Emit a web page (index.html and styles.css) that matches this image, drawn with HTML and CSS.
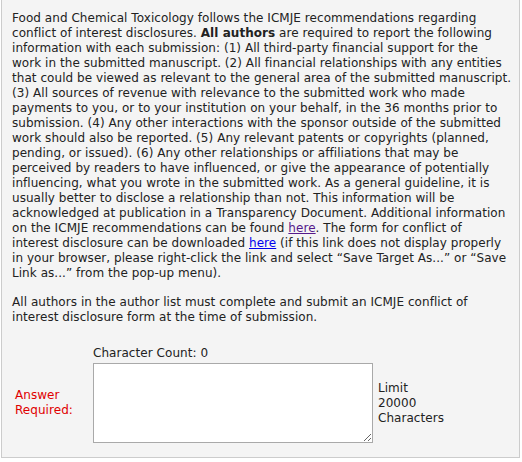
FILE: index.html
```html
<!DOCTYPE html>
<html lang="en">
<head>
    <meta charset="UTF-8">
    <meta name="viewport" content="width=device-width, initial-scale=1.0">
    <title>Conflict of Interest</title>
    <link rel="stylesheet" href="styles.css">
</head>
<body>

<div class="question">
    <p class="instructions">
        Food and Chemical Toxicology follows the ICMJE recommendations regarding<br>
        conflict of interest disclosures. <b>All authors</b> are required to report the following<br>
        information with each submission: (1) All third-party financial support for the<br>
        work in the submitted manuscript. (2) All financial relationships with any entities<br>
        that could be viewed as relevant to the general area of the submitted manuscript.<br>
        (3) All sources of revenue with relevance to the submitted work who made<br>
        payments to you, or to your institution on your behalf, in the 36 months prior to<br>
        submission. (4) Any other interactions with the sponsor outside of the submitted<br>
        work should also be reported. (5) Any relevant patents or copyrights (planned,<br>
        pending, or issued). (6) Any other relationships or affiliations that may be<br>
        perceived by readers to have influenced, or give the appearance of potentially<br>
        influencing, what you wrote in the submitted work. As a general guideline, it is<br>
        usually better to disclose a relationship than not. This information will be<br>
        acknowledged at publication in a Transparency Document. Additional information<br>
        on the ICMJE recommendations can be found <a href="#" class="visited">here</a>. The form for conflict of<br>
        interest disclosure can be downloaded <a href="#">here</a> (if this link does not display properly<br>
        in your browser, please right-click the link and select &ldquo;Save Target As...&rdquo; or &ldquo;Save<br>
        Link as...&rdquo; from the pop-up menu).
    </p>
    <p class="instructions">
        All authors in the author list must complete and submit an ICMJE conflict of<br>
        interest disclosure form at the time of submission.
    </p>

    <div class="answer">
        <div class="count">Character Count: 0</div>
        <label class="required" for="answer">Answer<br>Required:</label>
        <textarea id="answer"></textarea>
        <div class="limit">Limit<br>20000<br>Characters</div>
    </div>
</div>

</body>
</html>
```

FILE: styles.css
```css
body {
    margin: 0;
    background-color: #ffffff;
    font-family: 'DejaVu Sans', Verdana, sans-serif;
    font-size: 12px;
    letter-spacing: 0.05px;
    line-height: 15px;
    color: #222222;
}

.question {
    width: 497px;
    margin-left: 1px;
    padding: 11px 10px 14px 10px;
    background-color: #f4f4f4;
    border: 1px solid #cccccc;
    border-top: none;
}

.instructions {
    margin: 0 0 14px 0;
    white-space: nowrap;
}

.instructions a {
    color: #0000ee;
}

.instructions a.visited {
    color: #551a8b;
}

.answer {
    display: grid;
    grid-template-columns: 81px 280px auto;
    align-items: center;
    margin-top: 21px;
}

.count {
    grid-column: 2 / 4;
    margin-bottom: 2px;
}

.required {
    padding-left: 3px;
    color: #e00000;
}

.answer textarea {
    box-sizing: border-box;
    width: 280px;
    height: 80px;
    margin: 0;
    border: 1px solid #a9a9a9;
    font-family: inherit;
}

.limit {
    padding-left: 5px;
}
```
